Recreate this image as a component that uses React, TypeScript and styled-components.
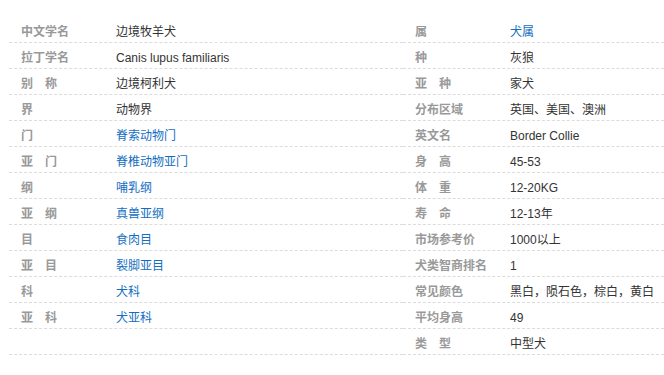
import React, { FC } from 'react';
import styled, { createGlobalStyle } from 'styled-components';

type Item = { label: string; value: string; link?: boolean };

const leftItems: Item[] = [
  { label: '中文学名', value: '边境牧羊犬' },
  { label: '拉丁学名', value: 'Canis lupus familiaris' },
  { label: '别\u3000称', value: '边境柯利犬' },
  { label: '界', value: '动物界' },
  { label: '门', value: '脊索动物门', link: true },
  { label: '亚\u3000门', value: '脊椎动物亚门', link: true },
  { label: '纲', value: '哺乳纲', link: true },
  { label: '亚\u3000纲', value: '真兽亚纲', link: true },
  { label: '目', value: '食肉目', link: true },
  { label: '亚\u3000目', value: '裂脚亚目', link: true },
  { label: '科', value: '犬科', link: true },
  { label: '亚\u3000科', value: '犬亚科', link: true },
  { label: '', value: '' },
];

const rightItems: Item[] = [
  { label: '属', value: '犬属', link: true },
  { label: '种', value: '灰狼' },
  { label: '亚\u3000种', value: '家犬' },
  { label: '分布区域', value: '英国、美国、澳洲' },
  { label: '英文名', value: 'Border Collie' },
  { label: '身\u3000高', value: '45-53' },
  { label: '体\u3000重', value: '12-20KG' },
  { label: '寿\u3000命', value: '12-13年' },
  { label: '市场参考价', value: '1000以上' },
  { label: '犬类智商排名', value: '1' },
  { label: '常见颜色', value: '黑白，陨石色，棕白，黄白' },
  { label: '平均身高', value: '49' },
  { label: '类\u3000型', value: '中型犬' },
];

const GlobalStyle = createGlobalStyle`
  body {
    margin: 0;
    background: #fff;
    font-family: "Liberation Sans", Arial, "Noto Sans CJK SC", sans-serif;
    font-size: 12px;
  }
`;

const Column: FC<{ items: Item[]; wide?: boolean }> = ({ items, wide }) => (
  <List wide={wide}>
    {items.map((item, i) => (
      <Row key={i}>
        <Label>{item.label}</Label>
        <Value>{item.link ? <Link href="#">{item.value}</Link> : item.value}</Value>
      </Row>
    ))}
  </List>
);

const App: FC = () => (
  <>
    <GlobalStyle />
    <Wrapper>
      <Column items={leftItems} wide />
      <Column items={rightItems} />
    </Wrapper>
  </>
);

const Wrapper = styled.div`
  display: flex;
  padding: 17px 0 0 9px;
  width: 664px;
  box-sizing: border-box;
  overflow: hidden;
`;

const List = styled.dl<{ wide?: boolean }>`
  margin: 0;
  flex: ${({ wide }) => (wide ? '0 0 394px' : '1 0 auto')};
`;

const Row = styled.div`
  display: flex;
  height: 25px;
  box-sizing: content-box;
  padding-top: 0;
  line-height: 20px;
  border-bottom: 1px dashed #dcdcdc;
  white-space: nowrap;
  > * {
    padding-top: 5px;
  }
`;

const Label = styled.dt`
  width: 107px;
  flex: none;
  box-sizing: border-box;
  padding-left: 12px;
  color: #999;
  font-weight: bold;
`;

const Value = styled.dd`
  margin: 0;
  color: #333;
`;

const Link = styled.a`
  color: #136ec2;
  text-decoration: none;
`;

export default App;
